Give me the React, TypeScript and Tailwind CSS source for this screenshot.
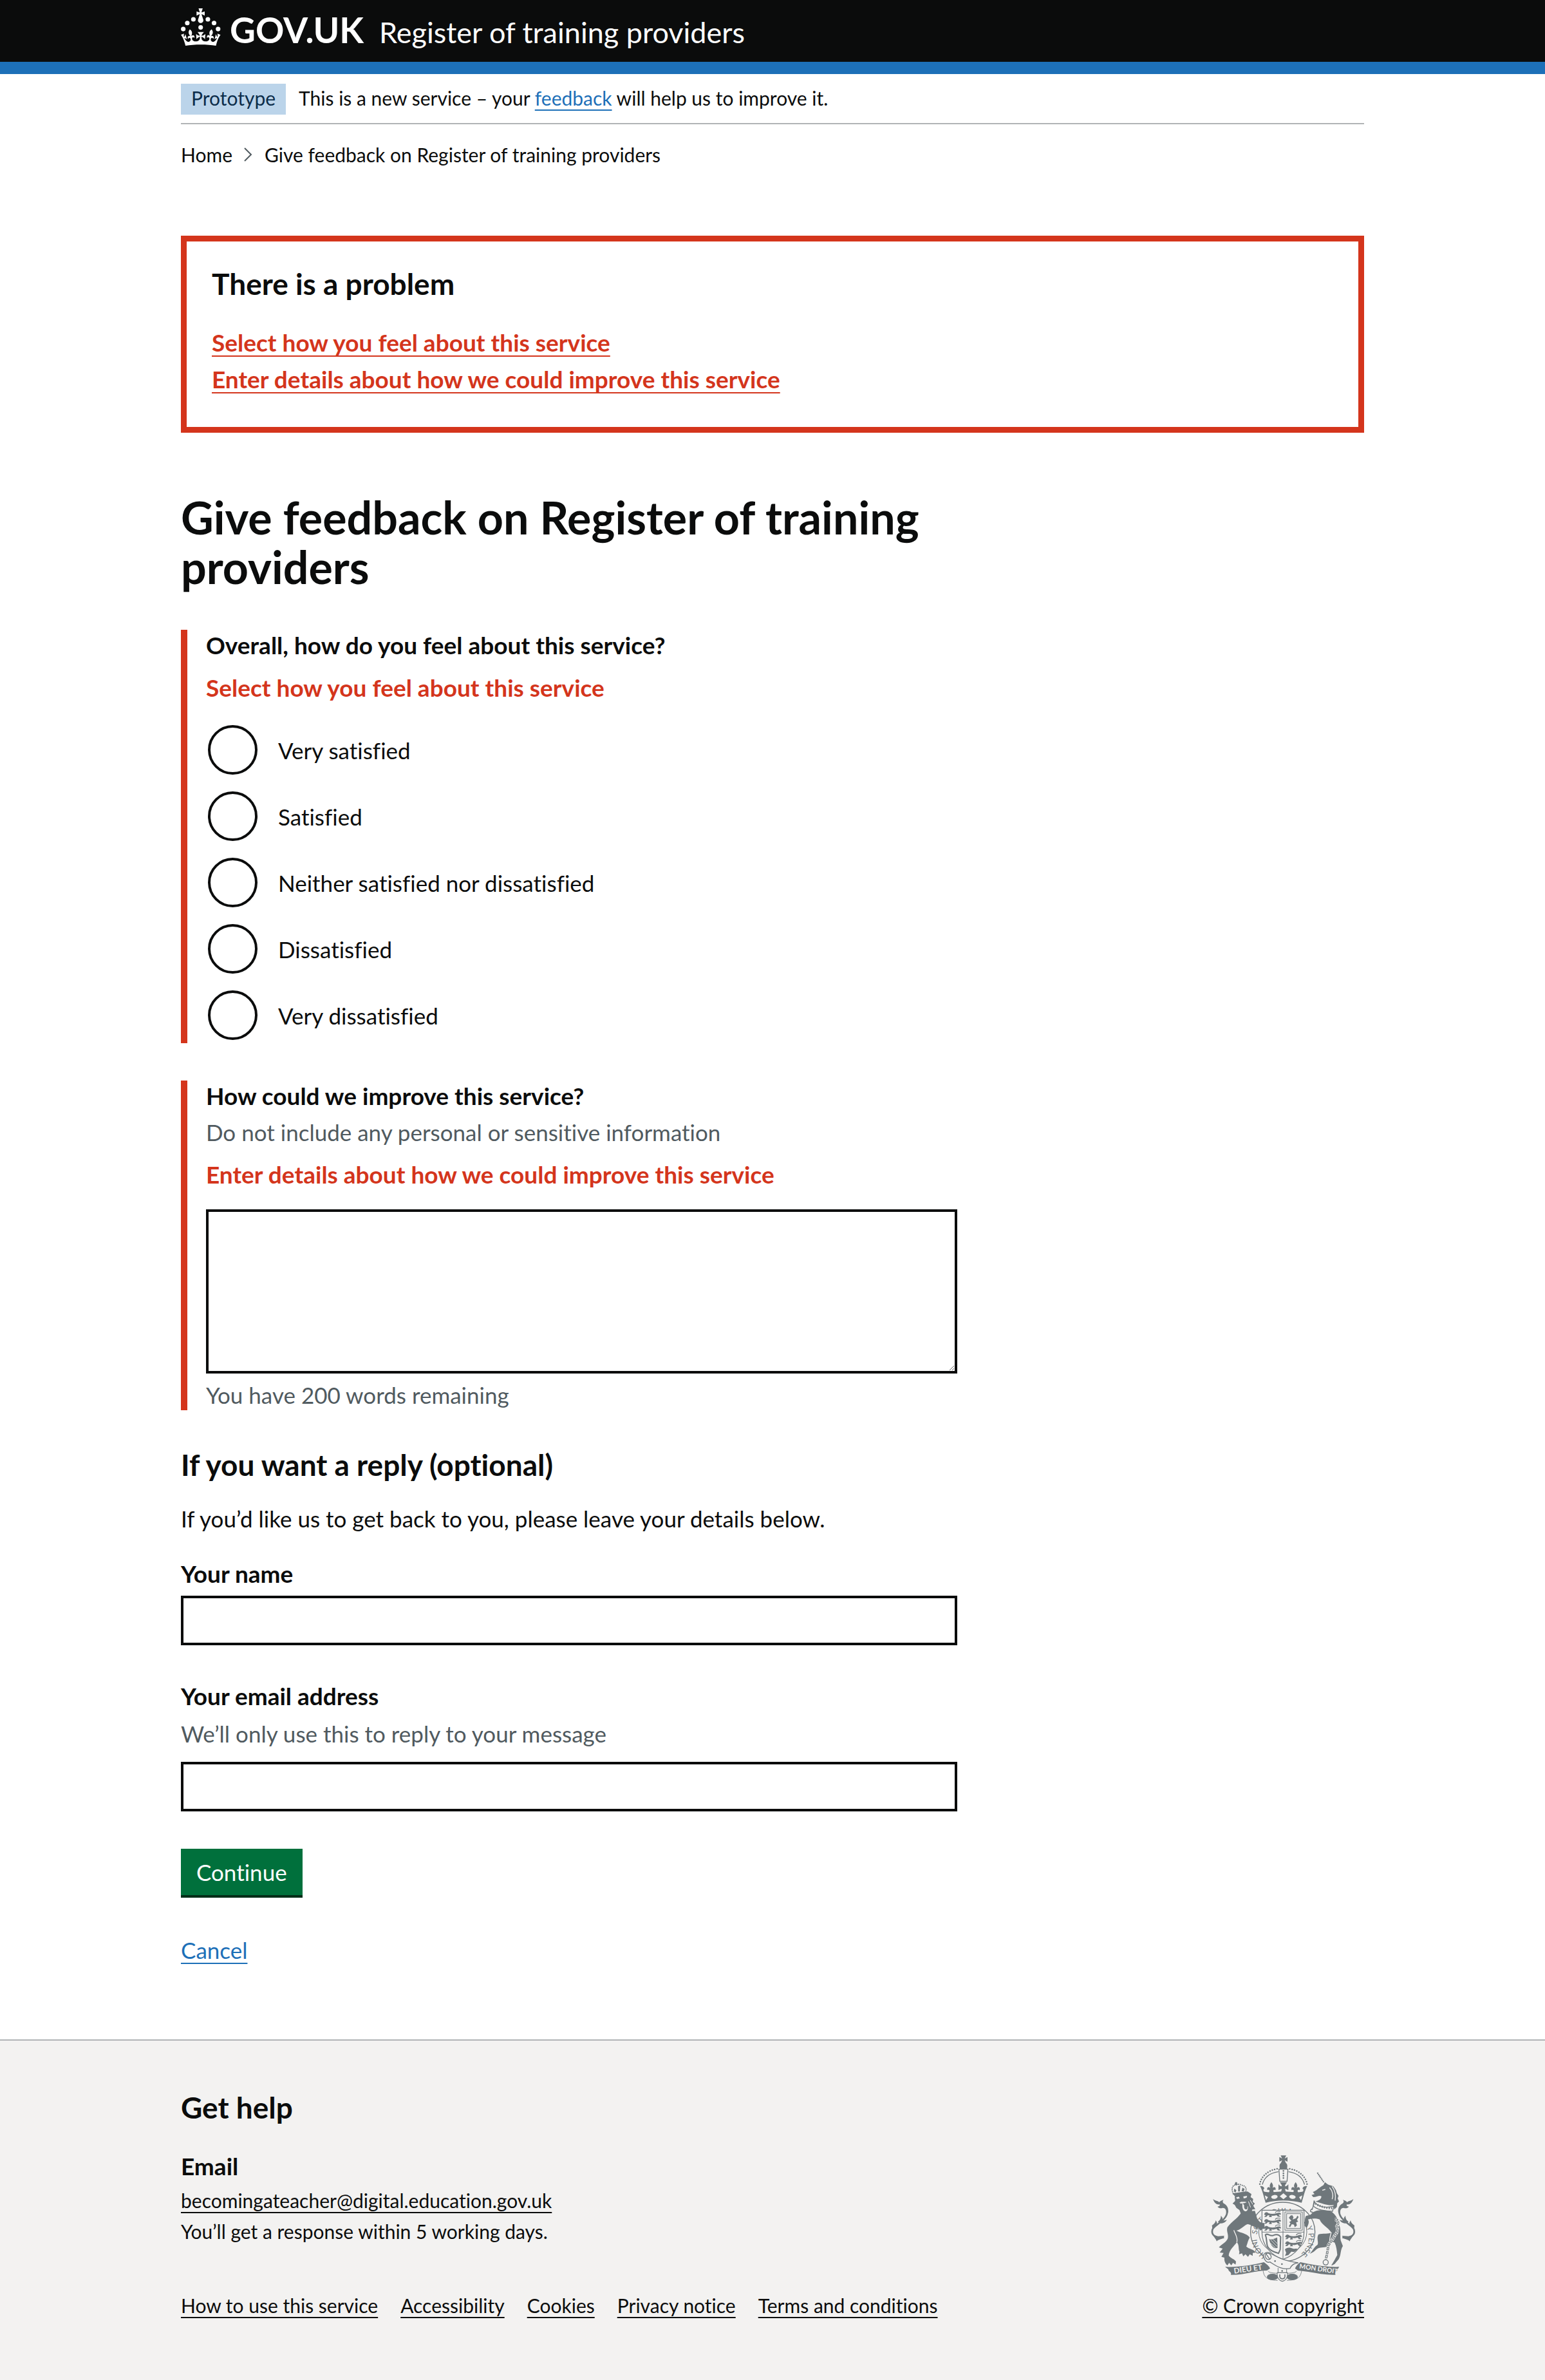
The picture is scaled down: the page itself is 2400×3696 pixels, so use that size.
import type { ReactNode } from "react";

const INK = "#6f777b";
const PAPER = "#f3f2f1";

function Crown() {
  return (
    <svg viewBox="0 0 64 60" className="mt-[13px] h-[58px] w-[62px] shrink-0" fill="currentColor" aria-hidden="true">
      <circle cx="20" cy="17.6" r="3.7" />
      <circle cx="10.2" cy="23.5" r="3.7" />
      <circle cx="3.7" cy="33.2" r="3.7" />
      <circle cx="31.7" cy="30.6" r="3.7" />
      <circle cx="43.3" cy="17.6" r="3.7" />
      <circle cx="53.2" cy="23.5" r="3.7" />
      <circle cx="59.7" cy="33.2" r="3.7" />
      <path d="M33.1,9.8c.2-.1.3-.3.5-.5l4.6,2.4v-6.8l-4.6,1.5c-.1-.2-.3-.3-.5-.5l1.9-5.9h-6.7l1.9,5.9c-.2.1-.3.3-.5.5l-4.6-1.5v6.8l4.6-2.4c.1.2.3.3.5.5l-2.6,8c-.9,2.8,1.2,5.7,4.1,5.7h0c3,0,5.1-2.9,4.1-5.7l-2.6-8ZM37,37.9s-3.4,3.8-4.1,6.1c2.2,0,4.2-.5,6.4-2.8l-.7,8.5c-2-2.8-4.4-4.1-5.7-3.8.1,3.1.5,6.7,5.8,7.2,3.7.3,6.7-1.5,7-3.8.4-2.6-2-4.3-3.7-1.6-1.4-4.5,2.4-6.1,4.9-3.2-1.9-4.5-1.8-7.7,2.4-10.9,3,4,2.6,7.3-1.2,11.1,2.4-1.3,6.2,0,4,4.6-1.2-2.8-3.7-2.2-4.2.2-.3,1.7.7,3.7,3,4.2,1.9.3,4.7-.9,7-5.9-1.3,0-2.4.7-3.9,1.7l2.4-8c.6,2.3,1.4,3.7,2.2,4.5.6-1.6.5-2.8,0-5.3l5,1.8c-2.6,3.6-5.2,8.7-7.3,17.5-7.4-1.1-15.7-1.7-24.5-1.7h0c-8.8,0-17.1.6-24.5,1.7-2.1-8.9-4.7-13.9-7.3-17.5l5-1.8c-.5,2.5-.6,3.7,0,5.3.8-.8,1.6-2.3,2.2-4.5l2.4,8c-1.5-1-2.6-1.7-3.9-1.7,2.3,5,5.2,6.2,7,5.9,2.3-.4,3.3-2.4,3-4.2-.5-2.4-3-3.1-4.2-.2-2.2-4.6,1.6-6,4-4.6-3.7-3.7-4.2-7.1-1.2-11.1,4.2,3.2,4.3,6.4,2.4,10.9,2.5-2.8,6.3-1.3,4.9,3.2-1.8-2.7-4.1-1-3.7,1.6.3,2.3,3.3,4.1,7,3.8,5.4-.5,5.7-4.2,5.8-7.2-1.3-.2-3.7,1-5.7,3.8l-.7-8.5c2.2,2.3,4.2,2.7,6.4,2.8-.7-2.3-4.1-6.1-4.1-6.1h10.6,0Z" />
    </svg>
  );
}

/* One walking lion of the quartered shield */
function Passant({ x, y }: { x: number; y: number }) {
  return (
    <g transform={`translate(${x} ${y})`} fill={INK}>
      <path d="M4 6 C8 -2 18 0 22 5 C34 9 48 9 60 5 C70 1 76 2 80 6 L80 12 L70 11 C70 16 76 18 80 22 L66 21 L60 14 C50 18 42 18 36 16 L38 23 L24 23 L28 16 L20 14 L12 22 L2 22 L10 14 L2 12 Z" />
      <path d="M54 3 C56 -5 68 -6 78 -3" fill="none" stroke={INK} strokeWidth="3.5" />
    </g>
  );
}

function FleurDeLis({ x }: { x: number }) {
  return (
    <path
      transform={`translate(${x} 206)`}
      d="M0 0 C8 10 10 18 5 27 C14 18 24 26 18 38 C15 33 9 35 9 42 L14 54 L-14 54 L-9 42 C-9 35 -15 33 -18 38 C-24 26 -14 18 -5 27 C-10 18 -8 10 0 0 Z"
    />
  );
}

function CrownArch() {
  return (
    <g fill="none" stroke={INK} strokeLinecap="round">
      <path d="M357 215 C364 178 396 150 440 144" strokeWidth="7.5" strokeDasharray="0 11.4" />
      <path d="M369 216 C378 184 404 164 442 158" strokeWidth="4" />
    </g>
  );
}

function Tail() {
  return (
    <g>
      <path
        d="M190 464 C150 470 130 452 136 428 C142 404 206 388 206 338"
        fill="none"
        stroke={INK}
        strokeWidth="8"
      />
      <path d="M139 284 C150 296 160 290 168 300 C172 294 178 292 188 288 C182 296 184 302 190 306 C204 314 212 326 209 346 L200 352 C202 336 196 326 184 326 C176 330 166 328 160 320 C168 320 172 316 170 310 C156 312 144 302 139 284 Z" fill={INK} />
      <path d="M176 362 L184 374 C180 384 184 388 204 382 C196 396 182 400 168 398 L162 390 C172 384 176 374 176 362 Z" fill={INK} />
      <path d="M152 384 L158 396 L152 410 L136 424 L134 408 C142 402 150 396 152 384 Z" fill={INK} />
      <path d="M140 452 L162 458 L192 456 L184 468 C172 474 160 476 156 482 C154 472 144 466 140 452 Z" fill={INK} />
    </g>
  );
}

function RoyalArms() {
  return (
    <svg viewBox="120 75 690 600" className="h-[200px] w-[230px]" role="img" aria-label="Royal coat of arms">
      {/* Garter */}
      <ellipse cx="464" cy="438" rx="150" ry="138" fill={PAPER} stroke={INK} strokeWidth="4" />
      <ellipse cx="464" cy="438" rx="112" ry="103" fill={PAPER} stroke={INK} strokeWidth="3" />
      <path id="garter" d="M392 552 A121 111 0 1 1 536 552" fill="none" />
      <g fill={INK} fontFamily="Lato, sans-serif" fontSize="35">
        <text>
          <textPath href="#garter" startOffset="6">HONI</textPath>
        </text>
        <text>
          <textPath href="#garter" startOffset="118">SOIT</textPath>
        </text>
        <text>
          <textPath href="#garter" startOffset="238">QUI M</textPath>
        </text>
        <text>
          <textPath href="#garter" startOffset="422">Y PENSE</textPath>
        </text>
      </g>

      {/* Shield */}
      <path d="M367 337 H563 V440 C563 500 520 548 465 566 C410 548 367 500 367 440 Z" fill={PAPER} stroke={INK} strokeWidth="3.5" />
      <path d="M465 337 V566 M367 439 H563" stroke={INK} strokeWidth="3" />
      <Passant x={375} y={346} />
      <Passant x={375} y={378} />
      <Passant x={375} y={410} />
      <Passant x={473} y={450} />
      <Passant x={473} y={482} />
      <path d="M474 520 C482 508 500 510 512 516 C522 518 528 514 534 518 L518 532 L504 530 L490 546 L474 550 L480 536 Z" fill={INK} />
      <rect x="474" y="345" width="81" height="85" fill="none" stroke={INK} strokeWidth="3" />
      <rect x="482" y="353" width="65" height="69" fill="none" stroke={INK} strokeWidth="3" />
      <path d="M492 372 L500 362 L508 360 L514 370 L510 380 L526 374 L532 362 L538 368 L530 382 L536 390 L526 394 L530 408 L520 416 L516 404 L506 402 L498 416 L492 412 L500 398 L494 392 L504 386 Z" fill={INK} />
      <path d="M383 452 C394 440 404 462 420 454 C436 448 446 450 454 462 L452 520 L444 538 C428 534 404 526 394 508 C386 492 392 474 383 452 Z" fill="none" stroke={INK} strokeWidth="6" />
      <path d="M400 470 C408 478 424 470 438 464 L440 512 C424 518 408 506 400 470 Z" fill={INK} />
      <path d="M408 476 L438 506 M418 472 L438 492 M406 490 L430 512" stroke={PAPER} strokeWidth="2.5" />

      {/* Crown */}
      <path d="M454 82 H480 L473 96 L486 89 V111 L473 104 L479 118 C486 122 486 132 484 144 H450 C448 132 448 122 455 118 L461 104 L448 111 V89 L461 96 Z" fill={INK} />
      <path d="M446 146 H488 L484 202 H450 Z" fill={PAPER} stroke={INK} strokeWidth="4" />
      <path d="M467 154 V198" stroke={INK} strokeWidth="8" strokeLinecap="round" strokeDasharray="0 11" />
      <CrownArch />
      <g transform="translate(934 0) scale(-1 1)">
        <CrownArch />
      </g>
      <path d="M358 224 C372 224 378 230 378 238 C374 236 372 242 376 250 C390 256 420 252 467 250 C514 252 544 256 558 250 C562 242 560 236 556 238 C556 230 562 224 578 224 C566 246 562 270 552 302 C500 288 434 288 384 302 C374 270 370 246 358 224 Z" fill={INK} />
      <g fill={INK}>
        <FleurDeLis x={411} />
        <FleurDeLis x={524} />
        <path d="M450 206 H484 C478 214 474 220 474 226 C480 226 486 222 490 216 V246 C486 240 480 238 474 238 L480 258 H454 L460 238 C454 238 448 240 444 246 V216 C448 222 454 226 460 226 C460 220 456 214 450 206 Z" />
      </g>
      <g fill={PAPER}>
        <path d="M467 258 L484 272 L467 286 L450 272 Z" />
        <ellipse cx="425" cy="275" rx="15" ry="9" transform="rotate(-8 425 275)" />
        <ellipse cx="509" cy="275" rx="15" ry="9" transform="rotate(8 509 275)" />
        <path d="M380 268 L395 276 L386 290 Z" />
        <path d="M555 268 L540 276 L549 290 Z" />
        <circle cx="444" cy="246" r="4" />
        <circle cx="490" cy="246" r="4" />
        <circle cx="390" cy="246" r="4" />
        <circle cx="546" cy="246" r="4" />
      </g>

      {/* Lion */}
      <Tail />
      <path d="M272 345 C262 368 228 388 206 416 C200 436 212 446 208 468 C200 488 180 494 166 510 L184 516 L170 534 L188 536 L178 554 L192 558 C190 572 196 586 206 594 L214 582 L224 594 L232 582 L244 590 L246 576 C236 562 222 562 212 548 C214 522 236 506 250 486 C262 500 256 516 262 530 L260 542 L274 538 L280 552 L290 542 L302 554 L310 542 L324 550 L324 536 L338 534 C330 518 306 518 294 506 C300 490 302 476 310 464 C296 444 268 444 248 432 C270 428 284 406 300 402 C314 404 322 412 330 412 L342 424 L350 418 L360 432 L370 424 L380 424 L378 396 C360 400 350 384 344 374 L334 340 Z" fill={INK} />
      <path d="M236 430 C240 446 256 462 250 486" fill="none" stroke={PAPER} strokeWidth="4" />
      <path d="M240 272 L252 258 L300 250 L318 262 L314 276 L326 284 L324 298 L334 306 L326 316 L336 332 L322 334 L318 350 L302 344 L284 358 L268 352 L262 336 L248 326 L240 312 L230 306 L242 294 Z" fill={INK} />
      <path d="M246 278 L258 274 L264 281 L252 284 Z M280 273 L298 270 L295 279 L282 282 Z M276 304 L284 314 C282 328 288 336 298 332 L300 316 C304 326 302 342 290 342 C278 340 274 326 276 304 Z M262 302 L270 298 L288 298 L296 300 L286 304 L268 306 Z" fill={PAPER} />
      <path d="M304 296 L314 324 M312 290 L324 310" stroke={PAPER} strokeWidth="3" />
      <path d="M234 262 C224 240 226 222 246 218 C252 214 270 216 276 222 C294 224 296 240 290 256 Z" fill="none" stroke={INK} strokeWidth="5" strokeDasharray="6 3" />
      <path d="M233 258 L290 250 L292 260 L238 270 Z M243 206 H251 V214 L256 216 L248 222 L240 216 Z M256 224 L266 222 L264 250 L256 250 Z M238 236 L248 244 L244 254 L236 250 Z M276 232 L286 238 L282 250 L272 248 Z" fill={INK} />

      {/* Unicorn */}
      <g transform="translate(932 0) scale(-1 1)">
        <Tail />
      </g>
      <path d="M625 162 L656 208" stroke={INK} strokeWidth="6" strokeDasharray="6 2" />
      <path d="M654 220 L660 206 L670 214 C680 224 700 220 704 232 L712 244 L716 258 L724 270 L720 282 L726 296 L718 304 L716 322 L704 334 L700 312 C680 318 650 306 616 296 C628 292 644 288 644 272 C634 266 622 276 606 276 L598 266 L612 262 L604 252 C620 248 630 234 654 220 Z" fill={INK} />
      <path d="M648 244 L662 240 M682 232 C698 248 700 270 694 286 M694 226 C708 246 712 270 708 292" fill="none" stroke={PAPER} strokeWidth="4" />
      <path d="M610 292 C616 318 660 330 702 318 L696 342 C660 342 620 334 606 316 Z" fill={PAPER} stroke={INK} strokeWidth="4" />
      <path d="M616 306 C640 322 670 328 696 328" fill="none" stroke={INK} strokeWidth="9" strokeDasharray="5 6" />
      <path d="M604 328 C588 338 590 346 604 346 M600 336 L612 300" fill="none" stroke={INK} strokeWidth="4" />
      <path d="M600 350 C620 332 668 334 694 346 C712 360 724 384 728 408 C736 430 730 456 734 478 L744 504 C732 520 736 548 724 566 L712 580 C706 590 696 594 690 594 C700 580 708 564 718 546 C716 524 714 506 706 488 C692 480 682 492 674 506 C656 512 634 508 622 518 C612 528 604 534 590 540 C604 524 612 506 626 498 C632 484 620 470 630 450 C650 442 680 450 690 440 C672 414 644 404 636 380 C616 372 592 376 582 380 C590 394 580 408 576 420 L566 410 C566 392 566 374 572 364 C584 360 596 360 600 350 Z" fill={INK} />
      <path d="M690 440 C686 456 680 470 684 484" fill="none" stroke={PAPER} strokeWidth="4" />
      <path d="M706 380 C724 380 726 400 716 412 C724 430 716 446 706 454 C700 470 690 480 678 498 C674 512 672 540 664 566" fill="none" stroke={PAPER} strokeWidth="15" />
      <path d="M706 380 C724 380 726 400 716 412 C724 430 716 446 706 454 C700 470 690 480 678 498 C674 512 672 540 664 566" fill="none" stroke={INK} strokeWidth="11" strokeDasharray="15 4" strokeLinejoin="round" />
      <path d="M706 380 C724 380 726 400 716 412 C724 430 716 446 706 454 C700 470 690 480 678 498 C674 512 672 540 664 566" fill="none" stroke={PAPER} strokeWidth="4" strokeDasharray="9 10" strokeDashoffset="-3" />
      <circle cx="664" cy="580" r="12" fill="none" stroke={INK} strokeWidth="4" />

      {/* Motto scroll */}
      <path d="M195 601 C260 603 330 592 376 579 C388 588 400 596 405 608 L390 618 C340 618 280 640 222 638 C228 626 210 622 210 612 Z" fill={INK} />
      <path d="M727 601 C670 603 600 592 546 579 C534 588 526 596 521 608 L534 618 C590 622 650 640 710 638 C704 630 720 618 720 612 Z" fill={INK} />
      <path d="M372 616 C376 650 390 662 440 664 M552 616 C548 650 534 662 484 664 M396 620 C400 630 420 628 440 632 M528 620 C524 630 504 628 484 632" fill="none" stroke={INK} strokeWidth="2.5" />
      <ellipse cx="416" cy="648" rx="26" ry="15" fill={INK} />
      <ellipse cx="508" cy="648" rx="26" ry="15" fill={INK} />
      <g fill={PAPER} fontFamily="Lato, sans-serif" fontWeight="700">
        <text x="238" y="632" fontSize="35" transform="rotate(-8 238 632)">DIEU ET</text>
        <text x="540" y="608" fontSize="31" transform="rotate(8 540 608)">MON DROIT</text>
      </g>

      {/* Belt and buckle */}
      <path d="M374 548 C378 532 396 530 410 540 C440 556 470 574 536 582 C516 584 504 594 498 608 C460 618 424 590 404 578 C388 586 376 566 374 548 Z" fill={PAPER} stroke={INK} strokeWidth="4" />
      <ellipse cx="396" cy="552" rx="13" ry="15" fill="none" stroke={INK} strokeWidth="4" transform="rotate(-30 396 552)" />
      <path d="M384 538 L404 566" stroke={INK} strokeWidth="4" />
      <circle cx="428" cy="574" r="4" fill={INK} />
      <circle cx="460" cy="588" r="4" fill={INK} />
      <path d="M442 606 V630 M482 608 V630" stroke={INK} strokeWidth="3" />
      <path d="M438 628 H486 C488 652 476 666 462 668 C448 666 436 652 438 628 Z" fill={PAPER} stroke={INK} strokeWidth="3.5" />
      <path d="M450 636 V646 C452 660 472 660 474 646 V636" fill="none" stroke={INK} strokeWidth="5" />
      <circle cx="461" cy="620" r="4" fill={INK} />
    </svg>
  );
}

function Link({ children, className = "" }: { children: ReactNode; className?: string }) {
  return (
    <a href="#" className={`underline decoration-2 underline-offset-[6px] ${className}`}>
      {children}
    </a>
  );
}

const feelings = [
  "Very satisfied",
  "Satisfied",
  "Neither satisfied nor dissatisfied",
  "Dissatisfied",
  "Very dissatisfied",
];

const footerLinks = ["How to use this service", "Accessibility", "Cookies", "Privacy notice", "Terms and conditions"];

const container = "mx-auto w-full max-w-[1838px]";
const field = "block w-full border-4 border-[#0b0c0c] bg-white px-2 outline-none";
const strong = "text-[37px] font-bold";
const heading = "text-[46px] leading-[57px] font-bold";

export default function App() {
  return (
    <div className="bg-white font-[Lato,sans-serif] text-[35px] leading-[48px] text-[#0b0c0c] [font-variant-ligatures:none]">
      <header className="border-b-[19px] border-[#1d70b8] bg-[#0b0c0c] text-white">
        <div className={`${container} flex h-24 items-start`}>
          <a href="#" className="flex items-start" aria-label="GOV.UK">
            <Crown />
            <span className="ml-3.5 pt-[17px] text-[55px] leading-[58px] font-bold">GOV.UK</span>
          </a>
          <a href="#" className="ml-6 pt-[21px] text-[45px] leading-[58px]">
            Register of training providers
          </a>
        </div>
      </header>

      <div className={container}>
        <div className="flex items-start border-b-2 border-[#b1b4b6] pt-[15px] pb-[13px] text-[30px] leading-11">
          <strong className="bg-[#bbd4ea] px-4 pb-1 font-normal text-[#0c2d4a]">Prototype</strong>
          <p className="ml-5">
            This is a new service – your <Link className="text-[#1d70b8]">feedback</Link> will help us to improve it.
          </p>
        </div>
        <nav aria-label="Breadcrumb" className="mt-7">
          <ol className="flex items-center text-[30px] leading-[38px]">
            <li>
              <a href="#">Home</a>
            </li>
            <li className="flex items-center">
              <svg viewBox="0 0 14 22" className="mx-[18px] h-[22px] w-3.5" fill="none" stroke="#505a5f" strokeWidth="2" aria-hidden="true">
                <path d="M1 1 L11 11 L1 21" />
              </svg>
              Give feedback on Register of training providers
            </li>
          </ol>
        </nav>
      </div>

      <main className={`${container} pt-[107px] pb-[115px]`}>
        <div role="alert" className="border-[9px] border-[#d4351c] px-[39px] pt-[37px] pb-[50px]">
          <h2 className={heading}>There is a problem</h2>
          <ul className={`${strong} mt-[39px] flex flex-col gap-[9px] text-[#d4351c]`}>
            <li>
              <Link>Select how you feel about this service</Link>
            </li>
            <li>
              <Link>Enter details about how we could improve this service</Link>
            </li>
          </ul>
        </div>

        <form className="max-w-[1206px]">
          <h1 className="mt-[93px] text-[70px] leading-[77px] font-bold">Give feedback on Register of training providers</h1>

          <fieldset className="mt-[59px] border-l-[10px] border-[#d4351c] pb-[5px] pl-[29px]">
            <legend className={`${strong} float-left w-full`}>Overall, how do you feel about this service?</legend>
            <p className={`${strong} clear-both pt-[18px] text-[#d4351c]`}>Select how you feel about this service</p>
            <div className="mt-[34px] flex flex-col gap-[26px]">
              {feelings.map((label) => (
                <label key={label} className="flex items-center gap-8 pl-[3px]">
                  <input
                    type="radio"
                    name="feeling"
                    className="size-[77px] shrink-0 appearance-none rounded-full border-4 border-[#0b0c0c] bg-white"
                  />
                  {label}
                </label>
              ))}
            </div>
          </fieldset>

          <div className="mt-[58px] border-l-[10px] border-[#d4351c] pl-[29px]">
            <label htmlFor="improve" className={`${strong} block`}>
              How could we improve this service?
            </label>
            <p className="mt-2 text-[#505a5f]">Do not include any personal or sensitive information</p>
            <p className={`${strong} mt-[18px] text-[#d4351c]`}>Enter details about how we could improve this service</p>
            <textarea id="improve" className={`${field} mt-[30px] h-[255px] resize`} />
            <p className="mt-[9px] text-[#505a5f]">You have 200 words remaining</p>
          </div>

          <h2 className={`${heading} mt-14`}>If you want a reply (optional)</h2>
          <p className="mt-[31px]">If you’d like us to get back to you, please leave your details below.</p>

          <label htmlFor="name" className={`${strong} mt-[38px] block`}>
            Your name
          </label>
          <input id="name" type="text" className={`${field} mt-2.5 h-[77px]`} />

          <label htmlFor="email" className={`${strong} mt-[55px] block`}>
            Your email address
          </label>
          <p className="mt-2.5 text-[#505a5f]">We’ll only use this to reply to your message</p>
          <input id="email" type="email" className={`${field} mt-5 h-[77px]`} />

          <button type="button" className="mt-[58px] block border-b-4 border-[#002d18] bg-[#00703c] px-6 py-3 text-white">
            Continue
          </button>
          <p className="mt-[57px]">
            <Link className="text-[#1d70b8]">Cancel</Link>
          </p>
        </form>
      </main>

      <footer className="border-t-2 border-[#b1b4b6] bg-[#f3f2f1] pt-[75px] pb-[97px] text-[30px] leading-[38px]">
        <div className={`${container} flex items-end justify-between`}>
          <div>
            <h2 className={heading}>Get help</h2>
            <h3 className={`${strong} mt-[39px] leading-[48px]`}>Email</h3>
            <p className="mt-2.5">
              <Link>becomingateacher@digital.education.gov.uk</Link>
            </p>
            <p className="mt-2.5">You’ll get a response within 5 working days.</p>
            <ul className="mt-[77px] flex gap-[35px]">
              {footerLinks.map((label) => (
                <li key={label}>
                  <Link>{label}</Link>
                </li>
              ))}
            </ul>
          </div>
          <div className="flex flex-col items-center gap-4">
            <RoyalArms />
            <Link>© Crown copyright</Link>
          </div>
        </div>
      </footer>
    </div>
  );
}
